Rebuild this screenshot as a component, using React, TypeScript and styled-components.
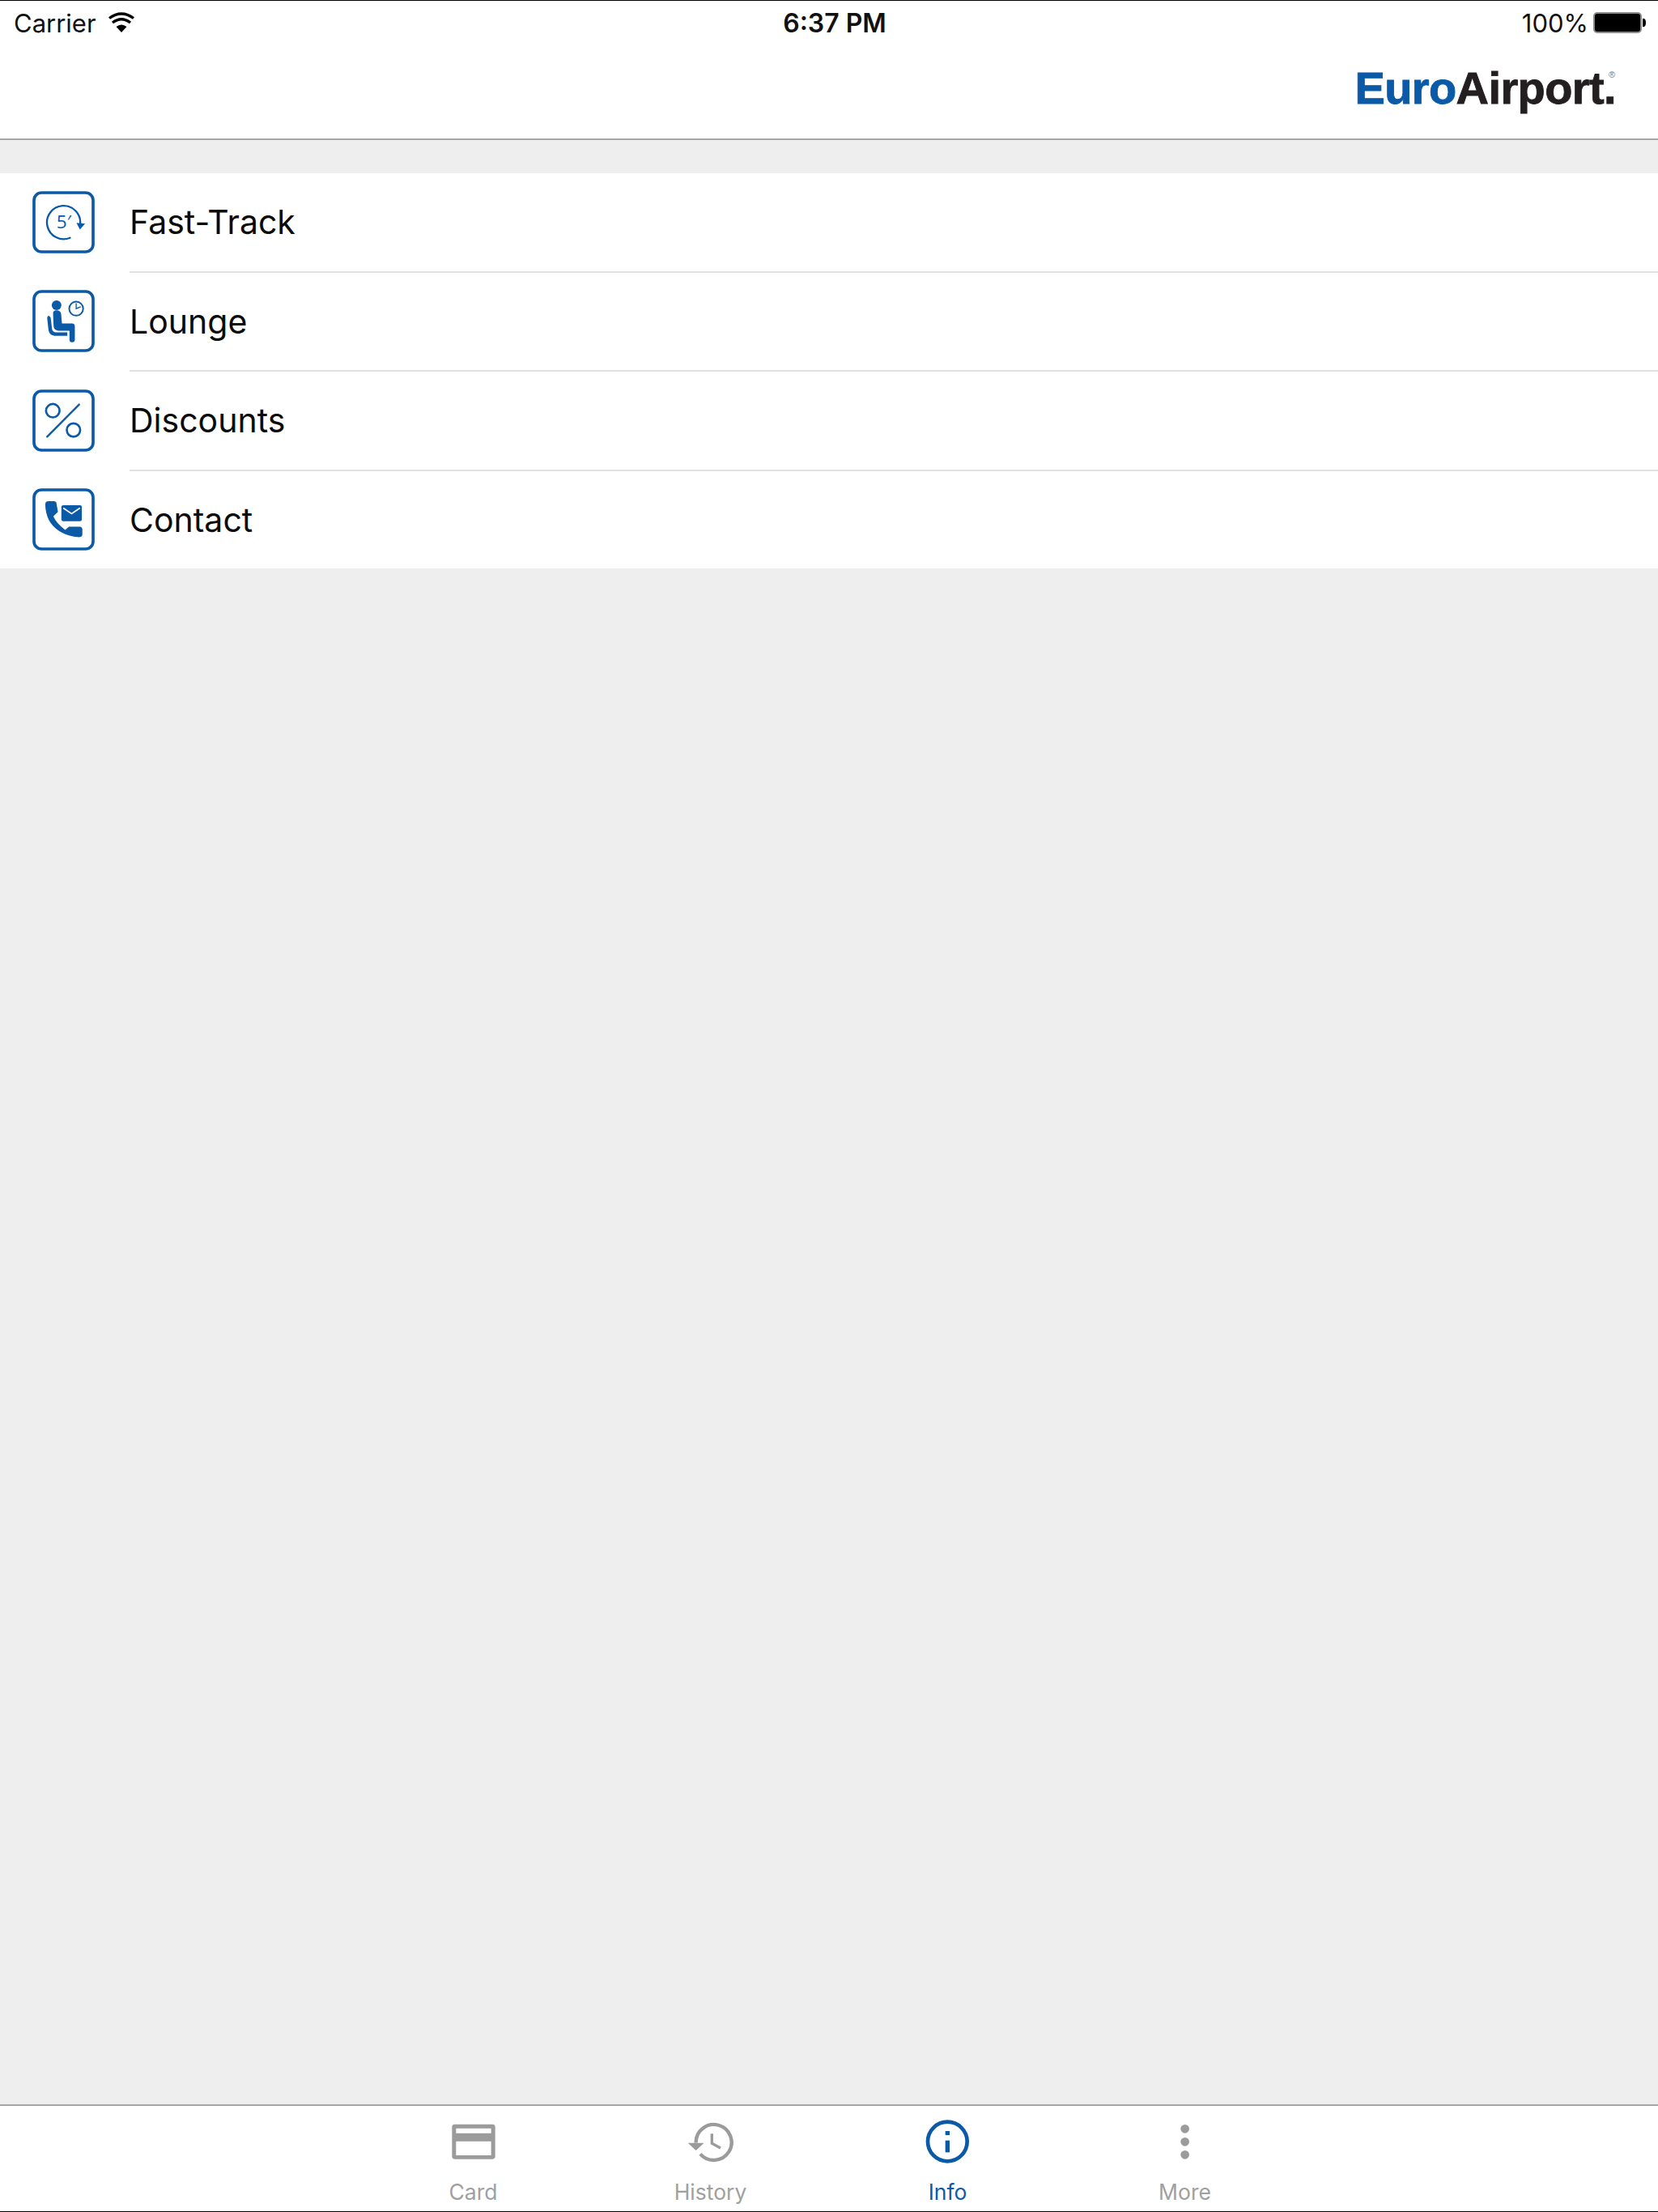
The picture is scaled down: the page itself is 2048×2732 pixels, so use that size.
import React from "react";
import styled, { createGlobalStyle } from "styled-components";

const Global = createGlobalStyle`
  html, body { margin: 0; padding: 0; background: #eeeeee; }
  body { font-family: Inter, "Liberation Sans", sans-serif; }
`;

const BLUE = "#0a5aa8";
const GREY = "#9b9b9b";

const Page = styled.div`
  width: 2048px;
  height: 2732px;
  display: flex;
  flex-direction: column;
  background: #eeeeee;
  overflow: hidden;
`;
const Header = styled.header`
  height: 173px;
  box-sizing: border-box;
  background: #fff;
  border-top: 1px solid #000;
  border-bottom: 2px solid #a6a6a6;
  display: flex;
  flex-direction: column;
`;
const StatusBar = styled.div`
  height: 54px;
  display: flex;
  align-items: center;
  padding: 0 14px 0 17px;
  color: #111;
  font-size: 31px;
`;
const StatusLeft = styled.div`
  display: flex;
  align-items: center;
  gap: 14px;
  flex: 1;
`;
const Clock = styled.div`
  font-weight: 600;
  font-size: 32px;
  flex: none;
  margin-left: 11px;
`;
const StatusRight = styled.div`
  display: flex;
  align-items: center;
  justify-content: flex-end;
  gap: 6px;
  flex: 1;
  font-size: 31px;
`;
const NavBar = styled.div`
  flex: 1;
  display: flex;
  justify-content: flex-end;
  padding: 26px 52px 0 0;
`;
const Logo = styled.div`
  position: relative;
  font-family: "Liberation Sans", Arial, sans-serif;
  font-weight: 700;
  font-size: 56px;
  line-height: 56px;
  height: 56px;
  letter-spacing: -0.6px;
  -webkit-text-stroke: 0.9px currentColor;
  color: #231f20;
  white-space: nowrap;
`;
const LogoBlue = styled.span`
  color: ${BLUE};
`;
const LogoMark = styled.span`
  position: absolute;
  right: 1px;
  top: 5px;
  font-size: 11px;
  line-height: 12px;
  font-weight: 400;
  letter-spacing: 0;
  -webkit-text-stroke: 0;
  color: #777;
`;
const List = styled.ul`
  list-style: none;
  margin: 41px 0 0;
  padding: 0;
  background: #fff;
`;
const Row = styled.li<{ $last?: boolean }>`
  height: ${(p) => (p.$last ? "120.5px" : "122.5px")};
  display: flex;
  align-items: center;
  padding-left: 40px;
  gap: 43px;
`;
const RowBody = styled.div<{ $last?: boolean }>`
  flex: 1;
  height: 100%;
  box-sizing: border-box;
  display: flex;
  align-items: center;
  font-size: 41px;
  color: #0b0b0b;
  border-bottom: ${(p) => (p.$last ? "none" : "2px solid #e0e0e0")};
`;
const RowIcon = styled.svg<{ $last?: boolean }>`
  width: 77px;
  height: 77px;
  flex: none;
  margin-bottom: ${(p) => (p.$last ? "0" : "2px")};
`;
const Filler = styled.div`
  flex: 1;
`;
const TabBar = styled.nav`
  height: 133px;
  box-sizing: border-box;
  background: #fff;
  border-top: 2px solid #a6a6a6;
  border-bottom: 1px solid #000;
  display: flex;
  justify-content: center;
`;
const Tab = styled.div<{ $active?: boolean }>`
  width: 293px;
  display: flex;
  flex-direction: column;
  align-items: center;
  padding-top: 14px;
  color: ${(p) => (p.$active ? BLUE : "#a0a0a0")};
  font-size: 26.5px;
`;
const TabIcon = styled.svg`
  width: 60px;
  height: 60px;
  flex: none;
`;
const TabLabel = styled.span`
  margin-top: 17px;
  line-height: 30px;
`;

const Frame = ({ x, y }: { x: number; y: number }) => (
  <rect x={x + 6} y={y + 6} width={220} height={220} rx={28} fill="none" stroke={BLUE} strokeWidth={11} />
);

type IconProps = { $last?: boolean };

const FastTrackIcon = (p: IconProps) => (
  <RowIcon viewBox="60 45 232 232" {...p}>
    <Frame x={60} y={45} />
    <path d="M200 219 A62 62 0 1 1 238 168" fill="none" stroke={BLUE} strokeWidth={7} strokeLinecap="round" />
    <path d="M224 163 L256 166 L237 188 Z" fill={BLUE} />
    <text x="150" y="185" fontFamily="'Open Sans', sans-serif" fontSize="68" fill={BLUE}>5′</text>
  </RowIcon>
);

const LoungeIcon = (p: IconProps) => (
  <RowIcon viewBox="60 55 232 232" {...p}>
    <Frame x={60} y={55} />
    <circle cx="150" cy="112" r="18" fill={BLUE} />
    <path d="M137 142 Q137 131 150 131 Q165 131 167 145 L170 180 L208 180 Q218 180 218 192 L218 240 Q218 250 208 250 Q198 250 198 240 L198 207 L156 207 Q140 205 139 190 Z" fill={BLUE} />
    <path d="M128 158 L133 200 Q135 212 148 213 L190 213 L190 226 L142 226 Q124 224 120 205 L115 160 Q118 144 128 158 Z" fill={BLUE} />
    <circle cx="223" cy="125" r="26" fill="none" stroke={BLUE} strokeWidth={6} />
    <path d="M223 105 L223 125 L240 118" fill="none" stroke={BLUE} strokeWidth={4} />
  </RowIcon>
);

const DiscountIcon = (p: IconProps) => (
  <RowIcon viewBox="60 62 232 232" {...p}>
    <Frame x={60} y={62} />
    <circle cx="136" cy="141" r="25" fill="none" stroke={BLUE} strokeWidth={8} />
    <circle cx="213" cy="213" r="25" fill="none" stroke={BLUE} strokeWidth={8} />
    <path d="M234 118 L115 238" stroke={BLUE} strokeWidth={7} strokeLinecap="round" />
  </RowIcon>
);

const ContactIcon = (p: IconProps) => (
  <RowIcon viewBox="60 40 232 232" {...p}>
    <Frame x={60} y={40} />
    <path d="M108 100 Q108 88 120 88 L140 88 Q149 88 150 98 L155 128 L138 145 Q150 172 182 195 L196 183 L236 183 Q246 184 246 194 L246 212 Q246 222 234 222 L214 220 Q150 208 122 160 Q108 130 108 100 Z" fill={BLUE} />
    <rect x="168" y="103" width="76" height="60" rx="7" fill={BLUE} />
    <path d="M175 114 L206 135 L237 114" fill="none" stroke="#fff" strokeWidth={5} />
  </RowIcon>
);

const CardIcon = () => (
  <TabIcon viewBox="162 77 180 180">
    <path fillRule="evenodd" fill={GREY} d="M182 103 H322 Q332 103 332 113 V222 Q332 232 322 232 H182 Q172 232 172 222 V113 Q172 103 182 103 Z M187 118 V136 H317 V118 Z M187 166 V218 H317 V166 Z" />
  </TabIcon>
);

const HistoryIcon = () => (
  <TabIcon viewBox="1041 77 180 180">
    <path d="M1092 213 A66 66 0 1 0 1076 172" fill="none" stroke={GREY} strokeWidth={13} />
    <path d="M1046 172 L1106 172 L1076 200 Z" fill={GREY} />
    <path d="M1135 138 L1135 174 L1167 191" fill="none" stroke={GREY} strokeWidth={10} />
  </TabIcon>
);

const InfoIcon = () => (
  <TabIcon viewBox="420 77 180 180">
    <circle cx="508" cy="167" r="73" fill="none" stroke={BLUE} strokeWidth={14} />
    <rect x="500" y="128" width="16" height="15" fill={BLUE} />
    <rect x="500" y="163" width="16" height="44" fill={BLUE} />
  </TabIcon>
);

const MoreIcon = () => (
  <TabIcon viewBox="1299 77 180 180">
    <circle cx="1388" cy="120" r="16" fill={GREY} />
    <circle cx="1388" cy="168" r="16" fill={GREY} />
    <circle cx="1388" cy="216" r="16" fill={GREY} />
  </TabIcon>
);

const rows = [
  { label: "Fast-Track", Icon: FastTrackIcon },
  { label: "Lounge", Icon: LoungeIcon },
  { label: "Discounts", Icon: DiscountIcon },
  { label: "Contact", Icon: ContactIcon },
];

const tabs = [
  { label: "Card", Icon: CardIcon },
  { label: "History", Icon: HistoryIcon },
  { label: "Info", Icon: InfoIcon, active: true },
  { label: "More", Icon: MoreIcon },
];

export default function App() {
  return (
    <Page>
      <Global />
      <Header>
        <StatusBar>
          <StatusLeft>
            <span>Carrier</span>
            <svg width="34" height="26" viewBox="0 0 34 26">
              <path d="M17 25 L10.5 18 Q17 13 23.5 18 Z" fill="#000" />
              <path d="M6 13 Q17 4.500 28 13" fill="none" stroke="#000" strokeWidth="3.400" />
              <path d="M2 7.500 Q17 -3.500 32 7.500" fill="none" stroke="#000" strokeWidth="3.400" />
            </svg>
          </StatusLeft>
          <Clock>6:37 PM</Clock>
          <StatusRight>
            <span>100%</span>
            <svg width="66" height="28" viewBox="0 0 66 28">
              <rect x="1" y="2" width="58" height="24" rx="4" fill="#000" stroke="#8a8a8a" strokeWidth="2" />
              <path d="M61 9 h2 q2 1 2 5 q0 4 -2 5 h-2 Z" fill="#000" />
            </svg>
          </StatusRight>
        </StatusBar>
        <NavBar>
          <Logo>
            <LogoBlue>Euro</LogoBlue>Airport.<LogoMark>®</LogoMark>
          </Logo>
        </NavBar>
      </Header>
      <List>
        {rows.map((r, i) => {
          const last = i === rows.length - 1;
          return (
            <Row key={r.label} $last={last}>
              <r.Icon $last={last} />
              <RowBody $last={last}>{r.label}</RowBody>
            </Row>
          );
        })}
      </List>
      <Filler />
      <TabBar>
        {tabs.map((t) => (
          <Tab key={t.label} $active={t.active}>
            <t.Icon />
            <TabLabel>{t.label}</TabLabel>
          </Tab>
        ))}
      </TabBar>
    </Page>
  );
}
